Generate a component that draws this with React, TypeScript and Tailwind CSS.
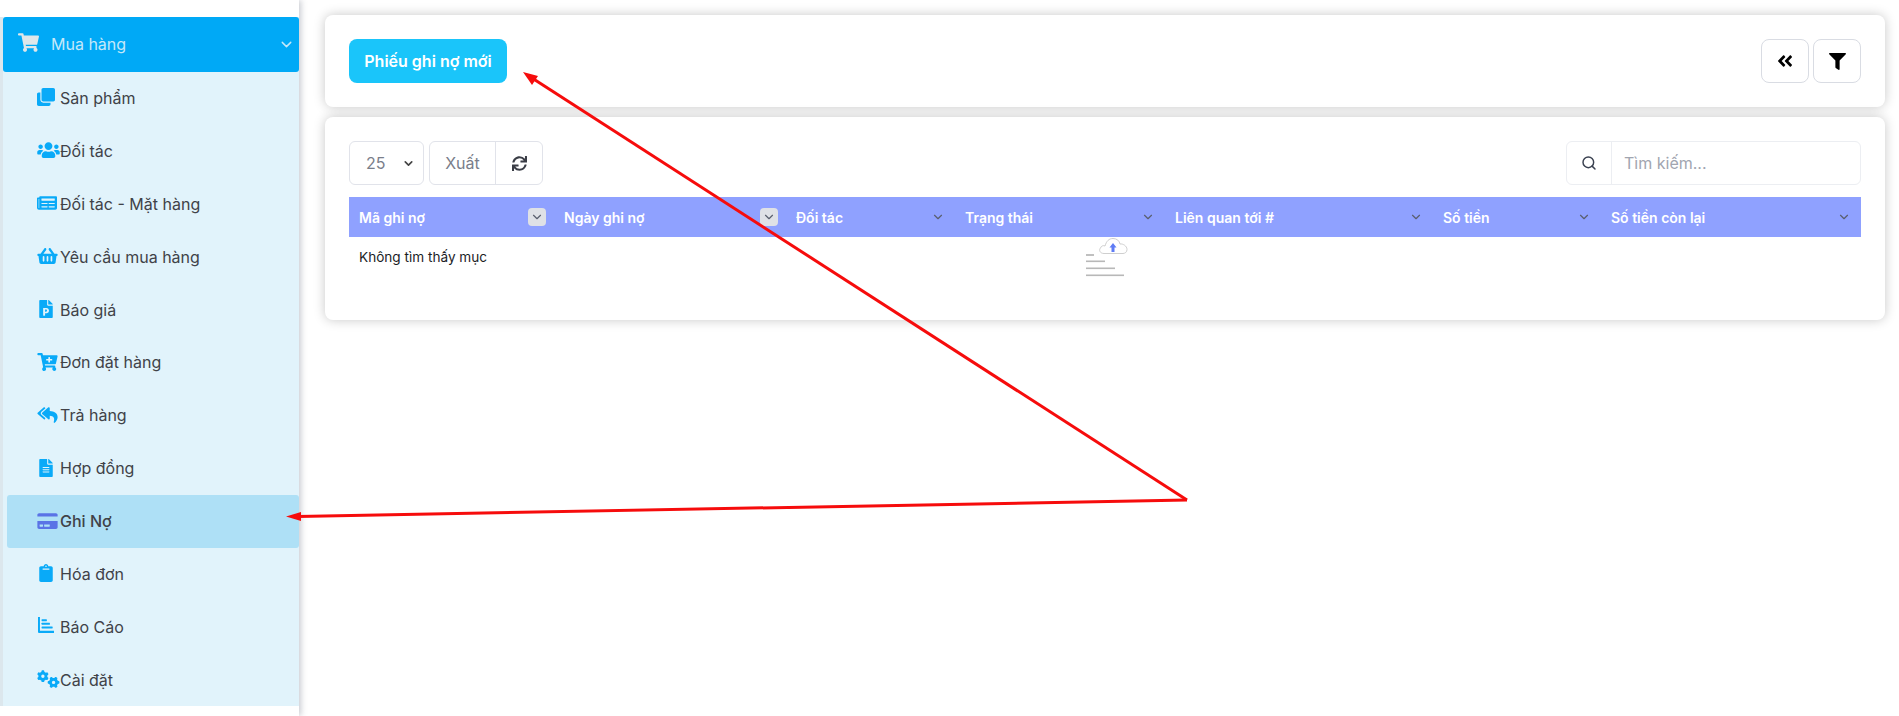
import React from "react";
import {
  FaShoppingCart, FaClone, FaUsers, FaNewspaper, FaShoppingBasket, FaFilePowerpoint, FaCartPlus,
  FaReplyAll, FaFileAlt, FaCreditCard, FaClipboard, FaAngleDoubleLeft, FaFilter, FaSync,
} from "react-icons/fa";
import { FaGears } from "react-icons/fa6";
import { ChevronDown, Search } from "lucide-react";

function BarsIcon({ className }: { className?: string }) {
  return (
    <svg viewBox="0 0 18 18" fill="currentColor" className={className}>
      <path d="M0 0h2.200v15.500H18V18H1.500C.6 18 0 17.400 0 16.500z" />
      <rect x="4" y="2.500" width="6" height="2.200" rx="0.500" />
      <rect x="4" y="6.500" width="9.500" height="2.200" rx="0.500" />
      <rect x="4" y="10.800" width="12.500" height="2.200" rx="0.500" />
    </svg>
  );
}

const items = [
  { label: "Sản phẩm", Icon: FaClone, size: "h-[18px] w-[18px]" },
  { label: "Đối tác", Icon: FaUsers, size: "h-[18px] w-[23px]" },
  { label: "Đối tác - Mặt hàng", Icon: FaNewspaper, size: "h-[18px] w-[20px]" },
  { label: "Yêu cầu mua hàng", Icon: FaShoppingBasket, size: "h-[18px] w-[21px]" },
  { label: "Báo giá", Icon: FaFilePowerpoint, size: "ml-[2px] h-[18px] w-[14px]" },
  { label: "Đơn đặt hàng", Icon: FaCartPlus, size: "h-[18px] w-[21px]" },
  { label: "Trả hàng", Icon: FaReplyAll, size: "h-[18px] w-[21px]" },
  { label: "Hợp đồng", Icon: FaFileAlt, size: "ml-[2px] h-[18px] w-[14px]" },
  { label: "Ghi Nợ", Icon: FaCreditCard, size: "h-[18px] w-[21px]", active: true },
  { label: "Hóa đơn", Icon: FaClipboard, size: "ml-[2px] h-[18px] w-[14px]" },
  { label: "Báo Cáo", Icon: BarsIcon, size: "h-[16px] w-[18px]" },
  { label: "Cài đặt", Icon: FaGears, size: "h-[18px] w-[23px]" },
];

const cols = [
  { label: "Mã ghi nợ", boxed: true },
  { label: "Ngày ghi nợ", boxed: true },
  { label: "Đối tác" },
  { label: "Trạng thái" },
  { label: "Liên quan tới #" },
  { label: "Số tiền" },
  { label: "Số tiền còn lại" },
];

function EmptyIcon() {
  return (
    <svg width="42" height="42" viewBox="0 0 42 42" className="absolute left-[737px] top-0">
      <path
        d="M18 16.500C14 16.500 12.500 13 14.500 11C15 9 17.500 8 19 9C20.500 4 23 1.500 27 1.500C31 1.500 33.500 4 34 7C37 6.500 41 9 41 12.500C41 15 39 16.500 37 16.500Z"
        fill="#fff"
        stroke="#cfcfcf"
        strokeWidth="1"
      />
      <path d="M27 6L23.500 10.500H25.500V15H28.500V10.500H30.500Z" fill="#5f7cf5" />
      <rect x="0" y="17" width="8" height="2" fill="#c0c0c0" />
      <rect x="0" y="23.500" width="19" height="1.600" fill="#b8b8b8" />
      <rect x="0" y="30.500" width="29" height="1.600" fill="#b8b8b8" />
      <rect x="0" y="37.500" width="38" height="1.600" fill="#b8b8b8" />
    </svg>
  );
}

export default function App() {
  return (
    <div className="relative flex h-[716px] w-[1899px] overflow-hidden bg-white text-[#3f4254] font-['Inter','Noto_Sans',sans-serif]">
      <aside className="z-10 h-full w-[299px] shrink-0 bg-white pt-[17px] shadow-[2px_0_6px_rgba(60,70,90,0.28)]">
        <div className="h-[689px] border-l-[3px] border-[#dce7ed] bg-[#e1f3fb]">
          <div className="flex h-[55px] items-center rounded-[3px] bg-[#00a9f6] pl-[15px] pr-[4px] text-[#c5e8f9]">
            <FaShoppingCart className="mb-[4px] h-[19px] w-[21px] text-[#dfe7ea]" />
            <span className="mb-[2px] ml-[12px] flex-1 text-[16px]">Mua hàng</span>
            <ChevronDown className="h-[17px] w-[17px]" strokeWidth={2} />
          </div>
          {items.map(({ label, Icon, size, active }) => (
            <div
              key={label}
              className={
                "ml-[4px] flex h-[52.9px] items-center pl-[30px] text-[16px] text-[#404248] " +
                (active ? "rounded-[3px] bg-[#aee0f6] font-medium" : "")
              }
            >
              <span className="flex h-[20px] w-[23px] shrink-0 items-start">
                <Icon className={size + " shrink-0 " + (active ? "text-[#5a73e6]" : "text-[#09aaf8]")} />
              </span>
              <span className="mb-[1px]">{label}</span>
            </div>
          ))}
        </div>
      </aside>

      <main className="flex-1 pl-[26px] pr-[14px] pt-[15px]">
        <section className="flex h-[92px] items-center justify-between rounded-[8px] bg-white px-[24px] shadow-[0_0_12px_rgba(0,0,0,0.22)]">
          <button className="h-[44px] w-[158px] rounded-[8px] bg-[#1ac5fa] text-[16px] font-semibold text-white">
            Phiếu ghi nợ mới
          </button>
          <div className="flex gap-[4px]">
            <button className="flex h-[44px] w-[48px] items-center justify-center rounded-[8px] border border-[#d9dce3] bg-white">
              <FaAngleDoubleLeft className="h-[18px] w-[18px] text-black" />
            </button>
            <button className="flex h-[44px] w-[48px] items-center justify-center rounded-[8px] border border-[#d9dce3] bg-white">
              <FaFilter className="h-[17px] w-[17px] text-black" />
            </button>
          </div>
        </section>

        <section className="mt-[10px] h-[203px] rounded-[8px] bg-white px-[24px] pt-[24px] shadow-[0_0_12px_rgba(0,0,0,0.22)]">
          <div className="flex h-[44px] items-center justify-between">
            <div className="flex h-[44px]">
              <div className="flex w-[75px] items-center rounded-[6px] border border-[#e1e3ea] pl-[16px] pr-[8px] text-[16px] text-[#7a7e8a]">
                <span className="flex-1">25</span>
                <ChevronDown className="h-[13px] w-[13px] text-[#444]" strokeWidth={3} />
              </div>
              <div className="ml-[5px] flex w-[114px] rounded-[6px] border border-[#e1e3ea]">
                <div className="flex w-[66px] items-center justify-center border-r border-[#e1e3ea] text-[16px] text-[#7a7e8a]">Xuất</div>
                <div className="flex flex-1 items-center justify-center">
                  <FaSync className="h-[15px] w-[15px] text-[#3a3d46]" />
                </div>
              </div>
            </div>
            <div className="flex h-[44px] w-[295px] rounded-[6px] border border-[#eceef2]">
              <div className="flex w-[45px] items-center justify-center border-r border-[#eceef2]">
                <Search className="h-[16px] w-[16px] text-[#3a4150]" strokeWidth={2.2} />
              </div>
              <div className="flex flex-1 items-center pl-[12px] text-[16px] text-[#a1a5b0]">Tìm kiếm...</div>
            </div>
          </div>

          <div className="mt-[12px] grid h-[40px] grid-cols-[205px_232px_169px_210px_268px_168px_260px] bg-[#8fa1ff] text-[14px] font-semibold text-white">
            {cols.map((c) => (
              <div key={c.label} className="flex items-center justify-between pl-[10px] pr-[8px]">
                <span>{c.label}</span>
                <span className={"flex h-[18px] w-[18px] items-center justify-center rounded-[4px] " + (c.boxed ? "bg-[#dfe1e6]" : "")}>
                  <ChevronDown className="h-[14px] w-[14px] text-[#5a5f6e]" strokeWidth={2} />
                </span>
              </div>
            ))}
          </div>
          <div className="relative h-[40px] pl-[10px] pt-[12px] text-[13.6px] leading-[17px] text-[#1b1d26]">
            Không tìm thấy mục
            <EmptyIcon />
          </div>
        </section>
      </main>

      <svg className="pointer-events-none absolute left-0 top-0 z-20" width="1899" height="716">
        <line x1="1187" y1="500" x2="532" y2="78" stroke="#f60c0c" strokeWidth="3" />
        <polygon points="523,72 538,76 532,85" fill="#f60c0c" />
        <line x1="1187" y1="500" x2="298" y2="516.500" stroke="#f60c0c" strokeWidth="3" />
        <polygon points="286,516.500 301,512 301,521" fill="#f60c0c" />
      </svg>
    </div>
  );
}
